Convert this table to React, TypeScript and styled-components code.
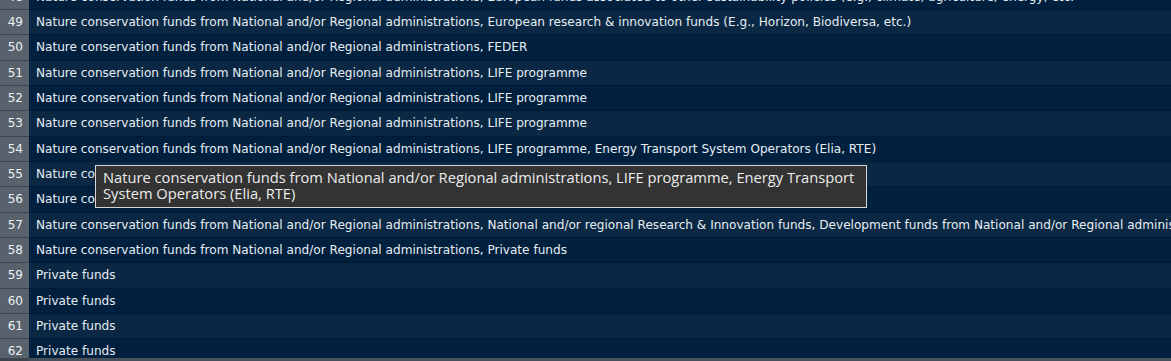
import React from 'react';
import styled, { createGlobalStyle } from 'styled-components';

const colors = {
	rowDark: '#00203e',
	rowLight: '#0a2843',
	rowLine: '#021a33',
	index: '#58626c',
	indexLine: '#3b444d',
	text: '#e6edf4',
	indexText: '#eef1f4',
	tipBg: '#333333',
	tipBorder: '#d6d6d6',
	tipText: '#ececec',
};

const ROW_HEIGHT = 25.33;

const GlobalStyle = createGlobalStyle`
	html, body {
		margin: 0;
		padding: 0;
		background: ${colors.rowDark};
		overflow: hidden;
	}
`;

const Screen = styled.div`
	position: relative;
	display: flex;
	flex-direction: column;
	width: 1171px;
	height: 373px;
	overflow: hidden;
	font-family: 'DejaVu Sans', 'Liberation Sans', sans-serif;
`;

const Body = styled.div`
	height: 358px;
	flex: none;
	overflow: hidden;
`;

// scroll offset of the grid, row 48 is half out of view
const Rows = styled.div<{ $scroll: number }>`
	display: flex;
	flex-direction: column;
	margin-top: -${p => p.$scroll}px;
`;

const Row = styled.div<{ $odd: boolean }>`
	display: flex;
	flex-direction: row;
	height: ${ROW_HEIGHT}px;
	box-sizing: border-box;
	border-bottom: 1px solid ${colors.rowLine};
	background-color: ${p => (p.$odd ? colors.rowLight : colors.rowDark)};
`;

const Index = styled.div`
	flex: none;
	width: 29px;
	box-sizing: border-box;
	display: flex;
	align-items: center;
	justify-content: flex-end;
	padding-right: 6px;
	margin-bottom: -1px;
	background-color: ${colors.index};
	border-bottom: 1px solid ${colors.indexLine};
	color: ${colors.indexText};
	font-size: 12px;
`;

const Cell = styled.div`
	flex: 1;
	display: flex;
	align-items: center;
	padding-left: 7px;
	white-space: nowrap;
	overflow: hidden;
	color: ${colors.text};
	font-size: 12.1px;
`;

const HScroll = styled.div`
	flex: none;
	height: 15px;
	display: flex;
	background: #46515c;
`;

const HScrollCorner = styled.div`
	width: 29px;
	background: ${colors.indexLine};
`;

const Tooltip = styled.div`
	position: absolute;
	left: 95px;
	top: 165px;
	width: 772px;
	box-sizing: border-box;
	padding: 3px 7px 6px 7px;
	background: ${colors.tipBg};
	border: 1px solid ${colors.tipBorder};
	color: ${colors.tipText};
	font-family: 'Open Sans', 'Noto Sans', sans-serif;
	font-size: 14.7px;
	line-height: 16px;
	display: flex;
	flex-direction: column;
`;

const TipLine = styled.span`
	white-space: nowrap;
`;

const NCF = 'Nature conservation funds from National and/or Regional administrations';

const rows: [number, string][] = [
	[48, `${NCF}, European funds associated to other sustainability policies (e.g., climate, agriculture, energy, etc.`],
	[49, `${NCF}, European research & innovation funds (E.g., Horizon, Biodiversa, etc.)`],
	[50, `${NCF}, FEDER`],
	[51, `${NCF}, LIFE programme`],
	[52, `${NCF}, LIFE programme`],
	[53, `${NCF}, LIFE programme`],
	[54, `${NCF}, LIFE programme, Energy Transport System Operators (Elia, RTE)`],
	[55, `${NCF}, LIFE programme`],
	[56, `${NCF}, LIFE programme`],
	[57, `${NCF}, National and/or regional Research & Innovation funds, Development funds from National and/or Regional administrations`],
	[58, `${NCF}, Private funds`],
	[59, 'Private funds'],
	[60, 'Private funds'],
	[61, 'Private funds'],
	[62, 'Private funds'],
];

export default function App() {
	return (
		<>
			<GlobalStyle />
			<Screen>
				<Body>
					<Rows $scroll={15.33}>
						{rows.map(([n, text]) => (
							<Row key={n} $odd={n % 2 === 1}>
								<Index>{n}</Index>
								<Cell>{text}</Cell>
							</Row>
						))}
					</Rows>
				</Body>
				<HScroll>
					<HScrollCorner />
				</HScroll>
				<Tooltip>
					<TipLine>
						Nature conservation funds from National and/or Regional administrations, LIFE programme, Energy Transport
					</TipLine>
					<TipLine>System Operators (Elia, RTE)</TipLine>
				</Tooltip>
			</Screen>
		</>
	);
}
